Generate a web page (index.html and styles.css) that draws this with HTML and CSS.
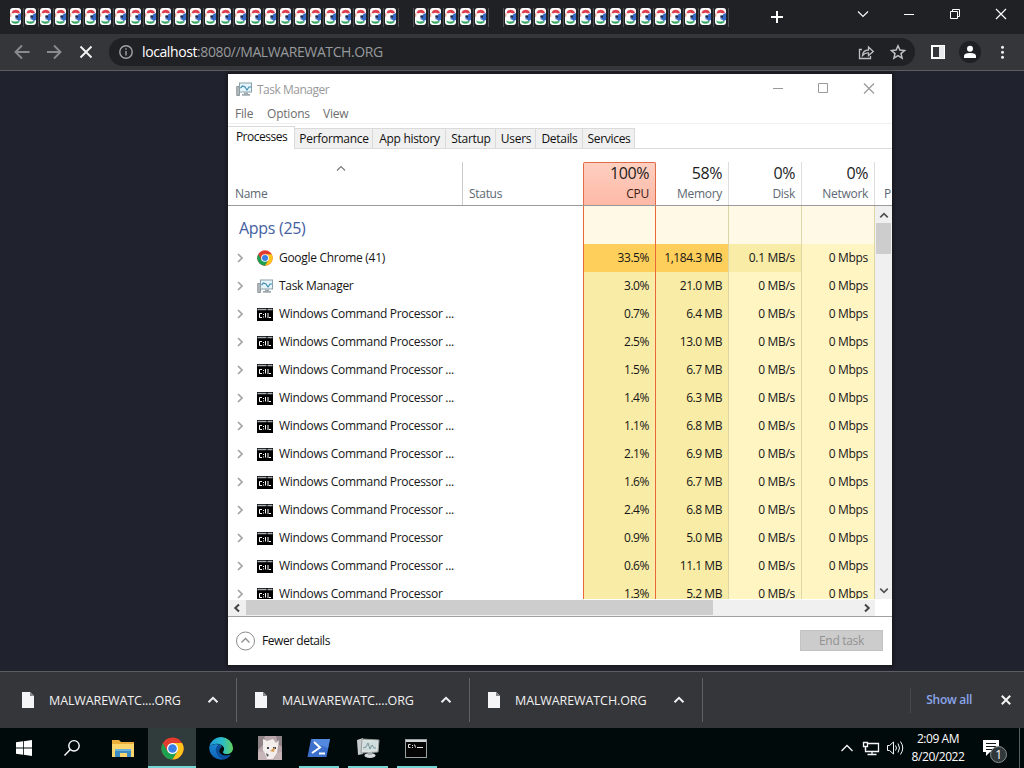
FILE: index.html
```html
<!DOCTYPE html>
<html lang="en">
<head>
  <meta charset="UTF-8">
  <meta name="viewport" content="width=device-width, initial-scale=1.0">
  <title>localhost:8080//MALWAREWATCH.ORG</title>
  <link rel="stylesheet" href="styles.css">
</head>
<body>
  <!-- shared icons -->
  <svg class="defs" width="0" height="0">
    <symbol id="chrome" viewBox="0 0 24 24">
      <circle cx="12" cy="12" r="11.5" fill="#e33b2e"/>
      <path d="M2 6.200A11.500 11.500 0 0 0 12 23.500L17.200 15L12 12L6.800 15Z" fill="#1da050"/>
      <path d="M22 6.200H12L17.200 15L12 23.500A11.500 11.500 0 0 0 22 6.200Z" fill="#fbc31c"/>
      <circle cx="12" cy="12" r="5.800" fill="#fff"/>
      <circle cx="12" cy="12" r="4.500" fill="#3a7ee8"/>
    </symbol>
    <symbol id="tabicon" viewBox="0 0 11 17">
      <rect width="11" height="17" rx="3" fill="#fff"/>
      <path d="M1.500 4.500Q2.500 1.800 5.500 1.800Q9 1.800 10 4.800L8 5.500Q5 3.800 3 5.500Z" fill="#dd3d4c"/>
      <path d="M8.500 6L11 5V12L8.500 13L7 11.500H5.500V10Q7 10.500 7.500 9.500H5.500V7.500H7.500Z" fill="#3568c4"/>
      <path d="M5.500 7.500H8V9.800H5.500Z" fill="#232a45"/>
      <path d="M1 12.500Q3 13.800 5.500 13.500L9.800 13Q9 15.800 5.500 15.800Q2 15.800 1 12.500Z" fill="#35a563"/>
      <path d="M0 5.500L1.300 5V8.500L0 9Z" fill="#e9a58f"/>
    </symbol>
    <symbol id="taskmgr" viewBox="0 0 16 16">
      <path d="M.7 5.5H3.5V14.5H.7Z" fill="#b3b9bb" stroke="#7d898e" stroke-width=".8"/>
      <rect x="3.500" y="2" width="12" height="9" fill="#e4f4fb" stroke="#8aa0aa"/>
      <path d="M4.500 7L6.500 5L9 6L11 9L13 6H15" fill="none" stroke="#3f89ad" stroke-width="1.100"/>
      <path d="M8 11.500H12V13H14V14.800H6V13H8Z" fill="#a0aaae"/>
    </symbol>
    <symbol id="cmd" viewBox="0 0 16 13">
      <rect width="16" height="13" fill="#000"/>
      <path d="M.5 1.500H15.500" stroke="#a9adaf" stroke-width="1.500" stroke-dasharray="9 1"/>
      <path d="M5 5.500H2.500V9.500H5M6.500 6V7M6.500 8.500V9.500M8.500 5V9.500M11 5V10M12 9.500H14" fill="none" stroke="#fff" stroke-width="1"/>
    </symbol>
    <symbol id="up" viewBox="0 0 12 8"><path d="M1.5 6.2L6 1.8L10.5 6.2" fill="none" stroke="currentColor" stroke-width="2"/></symbol>
    <symbol id="page" viewBox="0 0 12 16"><path d="M0 0H8L12 4V16H0Z" fill="#f5f5f8"/><path d="M8 0V4H12Z" fill="#85868b"/></symbol>
  </svg>

  <header class="tabstrip">
    <div class="tabs" id="tabs"></div>
    <svg class="strip-buttons" width="264" height="34" viewBox="760 0 264 34" fill="none" stroke="#fff">
      <path d="M771 17H783M777 11V23" stroke-width="2"/>
      <path d="M858 11.5L863 16.5L868 11.5" stroke-width="1.1"/>
      <path d="M904 14.5H914"/>
      <path d="M950.5 11.5H957.5V18.5H950.5ZM952.5 11.5V9.5H959.5V16.5H957.5"/>
      <path d="M996 9L1006 19M1006 9L996 19" stroke-width="1.2"/>
    </svg>
  </header>

  <nav class="toolbar">
    <svg width="101" height="36" viewBox="0 34 101 36" fill="none" stroke="#8a8b8e" stroke-width="1.9">
      <path d="M29.5 52H16M22 45.5L15.5 52L22 58.5"/>
      <path d="M47 52H60.5M54 45.5L60.5 52L54 58.5"/>
      <path d="M80.5 46.500L91.500 57.500M91.500 46.500L80.500 57.500" stroke="#f4f4f4"/>
    </svg>
    <div class="omnibox">
      <svg width="14" height="14" viewBox="0 0 14 14" fill="none" stroke="#a1a4a8" stroke-width="1.4"><circle cx="7" cy="7" r="6.200"/><path d="M7 6V10.500M7 3.300V4.800"/></svg>
      <span class="url"><b>localhost</b>:8080//MALWAREWATCH.ORG</span>
      <svg class="omni-icons" width="50" height="20" viewBox="857 42 50 20" fill="none" stroke="#bfc1c4" stroke-width="1.300">
        <path d="M862 49.500H859.500V58.500H870.500V56"/>
        <path d="M862.500 55.500Q863 50 868.500 50V47L873.300 51.500L868.500 55.500V53Q865 52.700 862.500 55.500Z"/>
        <path d="M898 45.800L899.900 50.100L904.500 50.500L901 53.600L902.100 58.100L898 55.700L893.900 58.100L895 53.600L891.500 50.500L896.100 50.100Z" stroke-width="1.500"/>
      </svg>
    </div>
    <svg width="109" height="36" viewBox="915 34 109 36">
      <path d="M932 46H944V58H932Z" fill="none" stroke="#fff" stroke-width="2"/><path d="M939 46H944V58H939Z" fill="#e9e9ec"/>
      <circle cx="970" cy="52" r="11" fill="#1f2023"/>
      <circle cx="970" cy="48.800" r="3" fill="#fff"/><path d="M964 58V56Q964 53 970 53Q976 53 976 56V58Z" fill="#fff"/>
      <g fill="#f3f3f3"><circle cx="1002.500" cy="47.300" r="1.500"/><circle cx="1002.500" cy="52.300" r="1.500"/><circle cx="1002.500" cy="57.300" r="1.500"/></g>
    </svg>
  </nav>

  <main class="content">
    <section class="window">
      <div class="titlebar">
        <svg width="16" height="16"><use href="#taskmgr"/></svg>
        <span class="title">Task Manager</span>
        <svg class="win-buttons" width="124" height="30" viewBox="768 74 124 30" fill="none" stroke="#999">
          <path d="M773 88.500H783"/><path d="M818.500 83.500H827.500V92.500H818.500Z"/><path d="M864 83.500L874 93.500M874 83.500L864 93.500" stroke-width="1.200"/>
        </svg>
      </div>
      <div class="menu"><span class="m-file">File</span><span class="m-options">Options</span><span class="m-view">View</span></div>
      <div class="wtabs">
        <span class="wtab active">Processes</span>
        <span class="wtab w-perf">Performance</span>
        <span class="wtab w-hist">App history</span>
        <span class="wtab w-start">Startup</span>
        <span class="wtab w-users">Users</span>
        <span class="wtab w-details">Details</span>
        <span class="wtab w-serv">Services</span>
      </div>

      <div class="grid head">
        <div class="col name"><svg width="10" height="7" viewBox="0 0 10 7"><path d="M1 5.500L5 1.500L9 5.500" fill="none" stroke="#777" stroke-width="1.100"/></svg><span>Name</span></div>
        <div class="col status"><span>Status</span></div>
        <div class="col num cpu"><b>100%</b><span>CPU</span></div>
        <div class="col num"><b>58%</b><span>Memory</span></div>
        <div class="col num"><b>0%</b><span>Disk</span></div>
        <div class="col num"><b>0%</b><span>Network</span></div>
        <div class="col more"><span>P</span></div>
      </div>

      <div class="body">
        <div class="rows" id="rows">
          <div class="grid group">
            <div class="group-name">Apps (25)</div><div></div>
            <div class="cell c-cpu"></div><div class="cell"></div><div class="cell"></div><div class="cell"></div>
          </div>
        </div>
        <div class="vscroll">
          <svg width="10" height="7"><use href="#up"/></svg>
          <div class="vthumb"></div>
          <svg class="down" width="10" height="7"><use href="#up"/></svg>
        </div>
      </div>
      <div class="hscroll">
        <svg width="18" height="16" viewBox="0 0 18 16"><path d="M11 4.500L7.300 8L11 11.500" fill="none" stroke="#444" stroke-width="2"/></svg>
        <div class="hthumb"></div>
        <svg class="right" width="18" height="16" viewBox="0 0 18 16"><path d="M8 4.500L11.700 8L8 11.500" fill="none" stroke="#444" stroke-width="2"/></svg>
      </div>
      <div class="wfooter">
        <svg width="20" height="20" viewBox="0 0 20 20" fill="none" stroke="#8c8c8c"><circle cx="10.500" cy="10" r="9"/><path d="M6.500 11.500L10.500 7.500L14.500 11.500" stroke-width="1.300"/></svg>
        <span class="fewer">Fewer details</span>
        <button class="end-task" disabled>End task</button>
      </div>
    </section>
  </main>

  <section class="shelf">
    <div class="download"><svg width="12" height="16"><use href="#page"/></svg><span>MALWAREWATC....ORG</span><svg class="chev" width="12" height="8"><use href="#up"/></svg></div>
    <div class="download"><svg width="12" height="16"><use href="#page"/></svg><span>MALWAREWATC....ORG</span><svg class="chev" width="12" height="8"><use href="#up"/></svg></div>
    <div class="download"><svg width="12" height="16"><use href="#page"/></svg><span>MALWAREWATCH.ORG</span><svg class="chev" width="12" height="8"><use href="#up"/></svg></div>
    <div class="show-all">Show all</div>
    <svg class="shelf-close" width="10" height="10" viewBox="0 0 10 10"><path d="M.8 .8L9.200 9.200M9.200 .8L.8 9.200" stroke="#f5f5f5" stroke-width="2"/></svg>
  </section>

  <footer class="taskbar">
    <div class="task start"><svg width="16" height="16" viewBox="0 0 16 16"><path d="M0 2.300L7 1.300V7.600H0ZM7.800 1.200L16 0V7.600H7.800ZM0 8.400H7V14.700L0 13.700ZM7.800 8.400H16V16L7.800 14.800Z" fill="#fff"/></svg></div>
    <div class="task search"><svg width="18" height="18" viewBox="0 0 18 18" fill="none" stroke="#fff" stroke-width="1.400"><circle cx="11" cy="6.800" r="5.200"/><path d="M7.300 10.600L1.500 16.500"/></svg></div>
    <div class="task explorer">
      <svg width="22" height="19" viewBox="0 0 22 19"><path d="M0 1H7L9 3H22V18H0Z" fill="#e9ae3c"/><path d="M0 5H22V18H0Z" fill="#fbd56e"/><path d="M3 10H19V18H15V14H8V18H3Z" fill="#3f8cc4"/><path d="M3 10H19V12H3Z" fill="#6bb3d8"/></svg>
    </div>
    <div class="task current"><svg width="23" height="23"><use href="#chrome"/></svg></div>
    <div class="task">
      <svg width="24" height="24" viewBox="0 0 24 24">
        <defs>
          <linearGradient id="e1" x2="1"><stop stop-color="#2199db"/><stop offset=".55" stop-color="#2bbdcb"/><stop offset="1" stop-color="#62d15c"/></linearGradient>
          <linearGradient id="e2" y2="1" x2="0"><stop stop-color="#1b86d1"/><stop offset="1" stop-color="#0e62b8"/></linearGradient>
        </defs>
        <path d="M.2 11A12 12 0 0 1 24 12C24 16 21 18 18 18Q14 18 14 16Q15.500 14.500 15 12Q14 9 10 8Q4 7 .2 11Z" fill="url(#e1)"/>
        <path d="M.2 11Q4 7 10 8.500Q13 9.500 12.500 11Q9 13 10 16.500Q12 21.500 21.500 19.200A12 12 0 0 1 .2 11Z" fill="url(#e2)"/>
        <path d="M9 9Q5 13 8 18Q10 22 15 23.500Q19.500 22.500 22 18.800Q14 21 11 17Q9 14 12.500 11Q12 9 9 9Z" fill="#0b4f9c"/>
      </svg>
    </div>
    <div class="task">
      <svg width="24" height="24" viewBox="0 0 24 24">
        <rect width="24" height="24" fill="#b8a5aa"/>
        <path d="M0 0H7L5 9L0 14ZM18 0H24V11L20 8Z" fill="#8f8387"/>
        <path d="M5 3L9 5L15 3L18 7L21 4L19 17L15 23H9L5 15Z" fill="#f3eeeb"/>
        <path d="M0 16L6 15L9 24H0ZM24 16L19 17L16 24H24Z" fill="#c8b5b7"/>
        <path d="M9 11H11V13H9ZM15 11H18V13H15Z" fill="#4b4548"/><path d="M12 15L17 11L16 16Z" fill="#d99c52"/><path d="M8 17L11 19L9 21Z" fill="#555"/>
      </svg>
    </div>
    <div class="task open">
      <svg width="24" height="20" viewBox="0 0 24 20"><path d="M4 1H23L19.500 19H.5Z" fill="#3d70cc"/><path d="M5 1H23L21 10L7 5Z" fill="#5389df"/><path d="M7 4L13 9.500L5 15M12 15.500H18" fill="none" stroke="#fff" stroke-width="2"/></svg>
    </div>
    <div class="task open">
      <svg width="24" height="22" viewBox="0 0 24 22"><path d="M1 3L7 1V17L2 18Z" fill="#c7cccc"/><path d="M6 2L23 3L22 15L5 16Z" fill="#dde2e1" stroke="#929b9a"/><path d="M8 4.500L21 5L20 13L7 14Z" fill="#cfdcdd"/><path d="M7 11L10 10L12 6L14 12L16 8L18 11H20" fill="none" stroke="#7b979c"/><ellipse cx="14" cy="18.500" rx="5.500" ry="2.500" fill="#d6dada"/><path d="M12 15H16V18H12Z" fill="#aab1b1"/></svg>
    </div>
    <div class="task open multi">
      <svg width="22" height="19" viewBox="0 0 22 19"><rect x=".5" y=".5" width="21" height="18" fill="#050505" stroke="#9ba1a1"/><rect x="1" y="1" width="20" height="2" fill="#d2d5d5"/><path d="M5.500 5.500H3.500V8.500H5.500M7.500 6V7M7.500 8V9M9.500 5.500L10.500 8.500M12 8.500H18" fill="none" stroke="#e5e5e5"/></svg>
    </div>
    <div class="tray">
      <svg width="66" height="40" viewBox="838 728 66 40" fill="none" stroke="#f6f6f6" stroke-width="1.300">
        <path d="M841.500 751L847 745.500L852.500 751"/>
        <path d="M867 743.500H878.500V751.500H865.500V748M872 751.500V754.500M867.500 754.500H876.500"/><path d="M863.500 742.500H867.500V746.500H863.500ZM865.500 746V750"/>
        <path d="M887.500 745.500H889.500L893.500 742V754L889.500 750.500H887.500ZM895.500 745.500Q897.500 748 895.500 750.500M898 743.500Q901 748 898 752.500M900.500 741.500Q905 748 900.500 754.500" stroke-width="1"/>
      </svg>
      <div class="clock"><span>2:09 AM</span><span>8/20/2022</span></div>
      <div class="notify">
        <svg width="16" height="17" viewBox="0 0 16 17"><path d="M0 0H16V12H7L3 16V12H0Z" fill="#fff"/><path d="M3 3.500H13M3 6.500H13M3 9.500H9" stroke="#101818" stroke-width="1.200"/></svg>
        <span class="badge">1</span>
      </div>
    </div>
  </footer>

  <script>
    const tabs = document.getElementById('tabs');
    for (let i = 0; i < 48; i++) {
      const blank = i === 26 || i === 32;
      tabs.innerHTML += '<div class="tab">' + (blank ? '' : '<svg width="11" height="17"><use href="#tabicon"/></svg>') + '</div>';
    }

    const cmd = 'Windows Command Processor';
    const processes = [
      ['chrome', 'Google Chrome (41)', '33.5%', '1,184.3 MB', '0.1 MB/s'],
      ['taskmgr', 'Task Manager', '3.0%', '21.0 MB'],
      ['cmd', cmd + ' ...', '0.7%', '6.4 MB'],
      ['cmd', cmd + ' ...', '2.5%', '13.0 MB'],
      ['cmd', cmd + ' ...', '1.5%', '6.7 MB'],
      ['cmd', cmd + ' ...', '1.4%', '6.3 MB'],
      ['cmd', cmd + ' ...', '1.1%', '6.8 MB'],
      ['cmd', cmd + ' ...', '2.1%', '6.9 MB'],
      ['cmd', cmd + ' ...', '1.6%', '6.7 MB'],
      ['cmd', cmd + ' ...', '2.4%', '6.8 MB'],
      ['cmd', cmd, '0.9%', '5.0 MB'],
      ['cmd', cmd + ' ...', '0.6%', '11.1 MB'],
      ['cmd', cmd, '1.3%', '5.2 MB']
    ];

    document.getElementById('rows').innerHTML += processes.map(function (p, i) {
      const size = p[0] === 'cmd' ? 'width="16" height="13"' : 'width="16" height="16"';
      return '<div class="grid row' + (i === 0 ? ' busy' : '') + '">' +
        '<div class="proc"><svg class="expand" width="6" height="10" viewBox="0 0 6 10"><path d="M1 1L5 5L1 9" fill="none" stroke="#a2a2a2" stroke-width="1.600"/></svg>' +
        '<svg class="icon" ' + size + '><use href="#' + p[0] + '"/></svg><span>' + p[1] + '</span></div><div></div>' +
        '<div class="cell c-cpu">' + p[2] + '</div>' +
        '<div class="cell c-mem">' + p[3] + '</div>' +
        '<div class="cell c-disk">' + (p[4] || '0 MB/s') + '</div>' +
        '<div class="cell c-net">0 Mbps</div></div>';
    }).join('');
  </script>
</body>
</html>
```

FILE: styles.css
```css
* {
  box-sizing: border-box;
}

body {
  margin: 0;
  width: 1024px;
  height: 768px;
  overflow: hidden;
  display: flex;
  flex-direction: column;
  font-family: "Open Sans", "Noto Sans", sans-serif;
  font-size: 12px;
  letter-spacing: -0.2px;
  background-color: #20222d;
}

svg {
  display: block;
  flex: none;
}

span {
  white-space: nowrap;
}

.defs {
  position: absolute;
}

/* browser */
.tabstrip {
  height: 34px;
  flex: none;
  display: flex;
  justify-content: space-between;
  background-color: #202124;
}

.tabs {
  display: flex;
  padding: 8px 0 0 9px;
}

.tab {
  width: 15px;
  height: 19px;
  padding-left: 1px;
  border-right: 1px solid #505154;
}

.toolbar {
  height: 37px;
  flex: none;
  display: flex;
  background-color: #35363a;
  border-bottom: 1px solid #5c5e61;
}

.toolbar > svg:first-child {
  margin-right: 8px;
}

.omnibox {
  width: 806px;
  height: 28px;
  margin-top: 4px;
  padding: 0 8px 0 10px;
  display: flex;
  align-items: center;
  border-radius: 14px;
  background-color: #202124;
}

.url {
  margin: -1px 0 0 9px;
  font-size: 14px;
  letter-spacing: -0.4px;
  color: #96999d;
}

.url b {
  font-weight: normal;
  color: #fff;
}

.omni-icons {
  margin-left: auto;
}

.content {
  height: 600px;
  flex: none;
  padding: 3px 0 0 228px;
}

/* task manager window */
.window {
  width: 664px;
  height: 591px;
  display: flex;
  flex-direction: column;
  letter-spacing: -0.3px;
  background-color: #fff;
  box-shadow: 0 0 2px 2px #191b20;
}

.titlebar {
  height: 30px;
  flex: none;
  display: flex;
  align-items: center;
  padding-left: 8px;
}

.title {
  margin-left: 5px;
  letter-spacing: -0.5px;
  color: #999;
}

.win-buttons {
  margin-left: auto;
}

.menu {
  height: 20px;
  flex: none;
  display: flex;
  padding-left: 7px;
  line-height: 20px;
  letter-spacing: -0.2px;
  color: #6d6d6d;
  border-bottom: 1px solid #f0f0f0;
}

.m-file {
  width: 32px;
}

.m-options {
  width: 56px;
}

.wtabs {
  height: 25px;
  flex: none;
  display: flex;
  align-items: flex-end;
  border-bottom: 1px solid #dcdcdc;
}

.wtab {
  height: 20px;
  line-height: 20px;
  padding-left: 1px;
  text-align: center;
  background-color: #f0f0f0;
  border: 1px solid #dadada;
  border-width: 1px 1px 0 0;
  color: #111;
}

.wtab.active {
  width: 67px;
  height: 23px;
  line-height: 20px;
  margin-bottom: -1px;
  letter-spacing: -0.5px;
  background-color: #fff;
}

.w-perf { width: 78px; }
.w-hist { width: 73px; }
.w-start { width: 50px; }
.w-users { width: 40px; }
.w-details { width: 47px; }
.w-serv { width: 52px; }

.grid {
  display: grid;
  grid-template-columns: 235px 120px 73px 73px 73px 73px 17px;
}

.head {
  height: 57px;
  flex: none;
  padding-top: 13px;
  border-bottom: 1px solid #9a9a9a;
  color: #5d6772;
}

.col {
  height: 43px;
  display: flex;
  flex-direction: column;
  justify-content: flex-end;
  line-height: 16px;
  padding: 0 6px 3px;
  border-right: 1px solid #dedede;
}

.col.name {
  padding-left: 7px;
  border-color: #ccc;
}

.col.name svg {
  margin: 0 0 14px 101px;
}

.col.status {
  border: none;
}

.col.num {
  text-align: right;
}

.col b {
  font-weight: normal;
  font-size: 16px;
  line-height: 20px;
  letter-spacing: -0.4px;
  padding-bottom: 3px;
  color: #1c1c1c;
}

.col.cpu {
  padding-left: 5px;
  color: #3c1c14;
  background: linear-gradient(#ffcfc0, #fdb9a6);
  border: 1px solid #e06c48;
  border-bottom: none;
  border-radius: 2px 2px 0 0;
}

.col.more {
  padding: 0 0 3px 9px;
  border: none;
  overflow: hidden;
}

.body {
  height: 394px;
  flex: none;
  display: flex;
  overflow: hidden;
}

.rows {
  width: 647px;
  height: 393px;
  overflow: hidden;
}

.rows .grid {
  grid-template-columns: 235px 120px 73px 73px 73px 73px;
}

.group {
  height: 38px;
}

.group-name {
  padding: 10px 0 0 11px;
  font-size: 16px;
  line-height: 24px;
  letter-spacing: -0.3px;
  color: #44609f;
}

.row {
  height: 28px;
  line-height: 28px;
  color: #161616;
}

.proc {
  display: flex;
  align-items: center;
}

.expand {
  margin: 0 14px 0 9px;
}

.proc .icon {
  margin-right: 6px;
}

.cell {
  padding-right: 6px;
  text-align: right;
  border-right: 1px solid #dcd5a6;
}

.c-cpu, .c-mem {
  letter-spacing: -0.45px;
  background-color: #f9eca6;
}

.c-cpu {
  border-left: 1px solid #e8683a;
  border-right: 1px solid #e8683a;
}

.c-disk, .c-net {
  background-color: #fff5c3;
}

.group .cell {
  background-color: #fff9e5;
}

.busy .c-cpu, .busy .c-mem {
  background-color: #ffcf5c;
}

.busy .c-disk {
  background-color: #f9eca6;
}

.vscroll {
  width: 17px;
  height: 393px;
  display: flex;
  flex-direction: column;
  align-items: center;
  padding-top: 6px;
  background-color: #f0f0f0;
  color: #505050;
}

.vthumb {
  width: 15px;
  height: 31px;
  margin-top: 4px;
  background-color: #cdcdcd;
}

.down {
  margin-top: auto;
  margin-bottom: 5px;
  transform: rotate(180deg);
}

.hscroll {
  width: 647px;
  height: 16px;
  flex: none;
  display: flex;
  background-color: #f0f0f0;
}

.hthumb {
  width: 467px;
  height: 15px;
  background-color: #cdcdcd;
}

.right {
  margin-left: auto;
}

.wfooter {
  flex: 1;
  display: flex;
  align-items: center;
  padding: 0 9px 1px 7px;
  border-top: 1px solid #a0a0a0;
}

.fewer {
  margin-left: 7px;
  letter-spacing: -0.45px;
  color: #111;
}

.end-task {
  width: 83px;
  height: 21px;
  margin-left: auto;
  padding: 0;
  font: inherit;
  letter-spacing: inherit;
  color: #929292;
  background-color: #cccccc;
  border: 1px solid #c2c2c2;
}

/* download shelf */
.shelf {
  height: 57px;
  flex: none;
  display: flex;
  align-items: center;
  background-color: #35363a;
  border-top: 1px solid #5c5e61;
}

.download {
  width: 233px;
  height: 44px;
  display: flex;
  align-items: center;
  padding: 0 17px 0 18px;
  border-right: 1px solid #606165;
  color: #f1f1f1;
}

.download:first-child {
  width: 237px;
  padding-left: 22px;
}

.download span {
  margin-left: 15px;
  font-size: 12.5px;
  letter-spacing: -0.1px;
}

.chev {
  margin-left: auto;
}

.show-all {
  height: 25px;
  margin-left: auto;
  padding-left: 15px;
  line-height: 23px;
  font-weight: 600;
  letter-spacing: -0.3px;
  color: #8ba5ea;
  border-left: 1px solid #46474d;
}

.shelf-close {
  margin: 0 13px 0 29px;
}

/* taskbar */
.taskbar {
  height: 40px;
  flex: none;
  display: flex;
  background-color: #010a0b;
}

.task {
  width: 49px;
  display: flex;
  align-items: center;
  justify-content: center;
  border-bottom: 2px solid transparent;
  padding-top: 2px;
}

.task.start, .task.search {
  width: 48px;
}

.task.explorer {
  width: 52px;
  padding-left: 1px;
}

.current {
  width: 48px;
  background-color: #303b3c;
  border-color: #76d5d3;
}

.open {
  width: 40px;
  margin: 0 4px 0 5px;
  border-color: #76d5d3;
}

.multi {
  margin-right: 0;
  padding-right: 2px;
}

.tray {
  margin-left: auto;
  width: 186px;
  display: flex;
  align-items: center;
  color: #fff;
}

.clock {
  width: 68px;
  margin-right: 2px;
  display: flex;
  flex-direction: column;
  align-items: center;
  line-height: 18px;
  letter-spacing: -0.45px;
}

.notify {
  position: relative;
  width: 46px;
  height: 40px;
  padding: 12px 0 0 9px;
  border-right: 1px solid #596061;
}

.badge {
  position: absolute;
  left: 16px;
  top: 18px;
  width: 17px;
  height: 17px;
  line-height: 15px;
  text-align: center;
  border: 1px solid #8a8f90;
  border-radius: 50%;
  background-color: #30383a;
}
```
